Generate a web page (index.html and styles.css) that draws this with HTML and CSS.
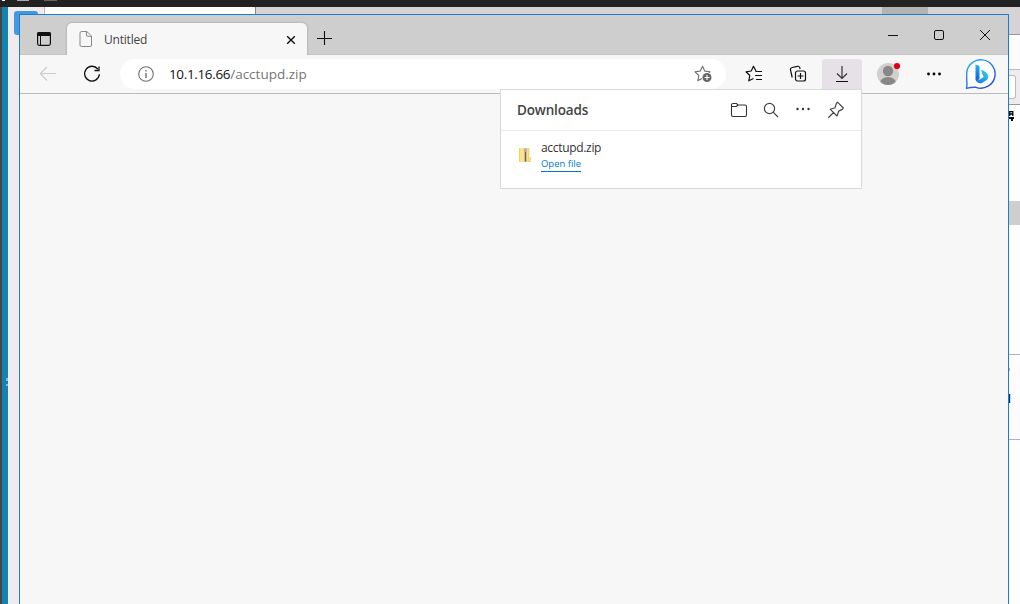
FILE: index.html
```html
<!DOCTYPE html>
<html lang="en">
<head>
  <meta charset="UTF-8" />
  <meta name="viewport" content="width=device-width, initial-scale=1.0"/>
  <title>Untitled</title>
  <link rel="stylesheet" href="styles.css">
</head>
<body>
  <!-- windows showing behind the browser -->
  <div class="desktop">
    <div class="taskbar"><i class="mark mark-a"></i><i class="mark mark-b"></i><i class="mark mark-c"></i></div>
    <div class="edge-dark"></div>
    <div class="edge-teal"></div>
    <div class="edge-speck"></div>
    <div class="back-side"></div>
    <div class="back-button"></div>
    <div class="back-tab"></div>
    <div class="back-title"></div>
    <div class="back-control"></div>
    <div class="back-right">
      <div class="strip strip-title"></div>
      <div class="strip strip-white"></div>
      <div class="strip strip-tools"><div class="strip-box"></div></div>
      <div class="strip strip-font">
        <svg width="6" height="11" viewBox="0 0 6 11"><path d="M.7 5V.7h3.100V5M.7 3h3" fill="none" stroke="#000" stroke-width="1.300"/><path d="M0 6h5v2H4v2H2V8H0z"/></svg>
      </div>
      <div class="strip strip-gray"></div>
      <div class="strip strip-page"></div>
      <div class="strip strip-note"><div class="speck"></div><div class="caret"></div></div>
    </div>
  </div>

  <div class="window">
    <div class="tabbar">
      <div class="tab-actions">
        <svg width="16" height="16" viewBox="0 0 16 16"><rect x="1.600" y="1.600" width="12.800" height="12.800" rx="1.800" fill="none" stroke="#111" stroke-width="1.200"/><path d="M1 5V3a2 2 0 0 1 2-2h10a2 2 0 0 1 2 2v2z" fill="#111"/><path d="M4.500 5v9.500" stroke="#111"/></svg>
      </div>
      <div class="tab">
        <svg class="page-icon" width="14" height="18" viewBox="0 0 14 18"><path d="M2.500 1.500h5.300L12.500 6v9a1.500 1.500 0 0 1-1.500 1.500H2.500A1.500 1.500 0 0 1 1 15V3a1.500 1.500 0 0 1 1.500-1.500zM7.500 1.500V5A1.300 1.300 0 0 0 8.800 6.300h3.700" fill="none" stroke="#888"/></svg>
        <span class="tab-title">Untitled</span>
        <svg class="tab-close" width="10" height="10" viewBox="0 0 10 10"><path d="M1.200 1.200l7.600 7.600M8.800 1.200L1.200 8.800" stroke="#111" stroke-width="1.400"/></svg>
      </div>
      <svg class="new-tab" width="16" height="16" viewBox="0 0 16 16"><path d="M8.500 1v14M1 8.500h15" stroke="#111" stroke-width="1.100"/></svg>
      <div class="controls">
        <svg width="46" height="40" viewBox="0 0 46 40"><path d="M18 20.500h10" stroke="#111"/></svg>
        <svg width="46" height="40" viewBox="0 0 46 40"><rect x="18.500" y="15.500" width="9" height="9" rx="1.500" fill="none" stroke="#111"/></svg>
        <svg width="46" height="40" viewBox="0 0 46 40"><path d="M18 15l10 10M28 15L18 25" stroke="#111"/></svg>
      </div>
    </div>

    <div class="toolbar">
      <div class="tool back">
        <svg width="18" height="16" viewBox="0 0 18 16"><path d="M8 1L1.300 7.500 8 14.500M1.300 7.500H17" fill="none" stroke="#cbcbcb" stroke-width="1.100"/></svg>
      </div>
      <div class="tool reload">
        <svg width="18" height="18" viewBox="0 0 18 18"><path d="M14.800 4A7.400 7.400 0 1 0 16.400 9.300M16 1.500V5.500H11.500" fill="none" stroke="#111" stroke-width="1.300"/></svg>
      </div>
      <div class="address">
        <svg width="16" height="16" viewBox="0 0 16 16"><circle cx="8" cy="8" r="7.300" fill="none" stroke="#707070" stroke-width="1.100"/><path d="M8 7v5M8 4v1.600" stroke="#707070" stroke-width="1.400"/></svg>
        <span class="url"><span class="host">10.1.16.66</span><span class="path">/acctupd.zip</span></span>
        <svg class="star" width="18" height="18" viewBox="0 0 18 18"><path d="M8.500 1.300l2.300 4.800 5.200.7-3.800 3.700 1 5.300-4.700-2.500-4.700 2.500 1-5.300L1 6.800l5.200-.7z" fill="none" stroke="#707070" stroke-width="1.100" stroke-linejoin="round"/><circle cx="13" cy="12.500" r="5.200" fill="#fff"/><circle cx="13" cy="12.500" r="4.500" fill="#666"/><path d="M13 10v5M10.500 12.500h5" stroke="#fff" stroke-width="1.100"/></svg>
      </div>
      <div class="tool favorites">
        <svg width="18" height="18" viewBox="0 0 18 18"><path d="M11 6L8.500 1.300 6.200 6 1 6.800l3.800 3.700-1 5.300L8.500 13.500" fill="none" stroke="#111" stroke-width="1.200" stroke-linejoin="round"/><path d="M10.500 6.500H17M10 10.500h7M11 14.500h6" stroke="#111" stroke-width="1.100"/></svg>
      </div>
      <div class="tool collections">
        <svg width="18" height="18" viewBox="0 0 18 18"><path d="M3.200 12.500L1.500 5a2 2 0 0 1 1.600-2.500L8.500 1.300a2 2 0 0 1 2.300 1.300l.3 1.400" fill="none" stroke="#111" stroke-width="1.200"/><rect x="6.500" y="6" width="10" height="10" rx="2" fill="#f7f7f7" stroke="#111" stroke-width="1.200"/><path d="M11.500 8v6M8.500 11h6" stroke="#111" stroke-width="1.200"/></svg>
      </div>
      <div class="tool downloads-btn">
        <svg width="16" height="18" viewBox="0 0 16 18"><path d="M8 1v12M3 8.500l5 5 5-5" fill="none" stroke="#333" stroke-width="1.200"/><path d="M2 16.500h12" stroke="#111"/></svg>
      </div>
      <div class="tool profile">
        <svg width="26" height="26" viewBox="0 0 26 26"><defs><clipPath id="face"><circle cx="13" cy="13" r="11"/></clipPath></defs><g clip-path="url(#face)"><path d="M0 0h26v26H0z" fill="#d2d0ce"/><circle cx="13" cy="10" r="5.200" fill="#8a8886"/><ellipse cx="13" cy="22" rx="8" ry="6" fill="#8a8886"/></g><circle cx="22" cy="5" r="3.100" fill="#e60012"/></svg>
      </div>
      <div class="tool menu">
        <svg width="16" height="6" viewBox="0 0 16 6"><circle cx="2.500" cy="3" r="1.400"/><circle cx="8" cy="3" r="1.400"/><circle cx="13.500" cy="3" r="1.400"/></svg>
      </div>
      <div class="tool bing">
        <svg width="32" height="32" viewBox="0 0 32 32">
          <defs>
            <linearGradient id="ring" x1="0" y1="0" x2=".7" y2="1"><stop offset="0" stop-color="#25bdf5"/><stop offset=".55" stop-color="#2876e8"/><stop offset="1" stop-color="#2351c5"/></linearGradient>
            <linearGradient id="stem" x1="0" y1="0" x2="0" y2="1"><stop offset="0" stop-color="#24b4f2"/><stop offset="1" stop-color="#1556d8"/></linearGradient>
            <linearGradient id="bowl" x1="1" y1="0" x2="0" y2="1"><stop offset="0" stop-color="#35d8e8"/><stop offset="1" stop-color="#1673e6"/></linearGradient>
          </defs>
          <path d="M1.500 30.300Q2.300 27 1.700 22V16A14.200 14.200 0 1 1 11 29.300Q6 29 1.500 30.300z" fill="#fff" stroke="url(#ring)" stroke-width="1.400" stroke-linejoin="round"/>
          <path d="M10.500 6.500l3 1.100c.7.300 1 .7 1 1.400v11.500L12 23.500a3 3 0 0 1-1.500-3z" fill="url(#stem)"/>
          <path d="M16.500 11.500l4 2.500c3.700 2.500 3.400 6.800.7 8.600l-4.200 2.300c-3 1-6.100-.7-6.500-4.500 1 2.300 2.500 2.300 4.300 1.200l3.900-2.600-1.500-3.200c-.6-1.200-.9-2.500-.7-4.300z" fill="url(#bowl)"/>
        </svg>
      </div>
    </div>

    <div class="flyout">
      <div class="flyout-head">
        <h2>Downloads</h2>
        <svg class="folder" width="18" height="16" viewBox="0 0 18 16"><path d="M1.500 4V3A1.500 1.500 0 0 1 3 1.500h3.500l1.500 1.500H15A1.500 1.500 0 0 1 16.500 4.500v8.500a1.500 1.500 0 0 1-1.500 1.500H3A1.500 1.500 0 0 1 1.500 13zM1.500 4.500h4.800l1.700-1.500" fill="none" stroke="#333" stroke-width="1.100"/></svg>
        <svg width="16" height="16" viewBox="0 0 16 16"><circle cx="6.500" cy="6.500" r="5.100" fill="none" stroke="#444" stroke-width="1.200"/><path d="M10.200 10.200l4.800 4.800" stroke="#444" stroke-width="1.200"/></svg>
        <svg width="16" height="16" viewBox="0 0 16 16"><circle cx="2.500" cy="7" r="1.200" fill="#333"/><circle cx="8" cy="7" r="1.200" fill="#333"/><circle cx="13.500" cy="7" r="1.200" fill="#333"/></svg>
        <svg width="18" height="18" viewBox="0 0 18 18"><path d="M10.500 1.200l5.800 5.800-1 1.400-3.600 1.700-1.700 4.900-6.600-6.700L8 6.800l1.500-4.700zM6.800 11.300L1.300 16.700" fill="none" stroke="#444" stroke-width="1.200" stroke-linejoin="round"/></svg>
      </div>
      <div class="download">
        <svg class="zip" width="14" height="16" viewBox="0 0 14 16"><path d="M1 1h10.500v9H13v5H1z" fill="#ffe28a"/><path d="M1 1h1v14H1z" fill="#f4cf63"/><path d="M10.500 1v14M12 11v4" stroke="#f5d36c"/><path d="M7.500 3v12" stroke="#9a968c" stroke-width="2"/><path d="M7.500 5v9" stroke="#666"/><circle cx="7.500" cy="2.800" r="1.800" fill="#b4b4b4"/></svg>
        <div class="download-info">
          <span class="file-name">acctupd.zip</span>
          <a class="open-file">Open file</a>
        </div>
      </div>
    </div>
  </div>
</body>
</html>
```
FILE: styles.css
```css
* {
  box-sizing: border-box;
}

body {
  margin: 0;
  width: 1020px;
  height: 604px;
  overflow: hidden;
  position: relative;
  background: #fff;
  font-family: 'Open Sans', 'Noto Sans', sans-serif;
  color: #333;
}

svg {
  display: block;
  flex: none;
}

/* desktop */
.desktop > div {
  position: absolute;
}

.desktop .taskbar {
  left: 0;
  top: 0;
  width: 1020px;
  height: 7px;
  background: #222;
}

.mark {
  position: absolute;
  top: 0;
  height: 1px;
  background: #aaa;
}

.mark-a { left: 2px; width: 3px; background: #fff; }
.mark-b { left: 17px; width: 12px; }
.mark-c { left: 44px; width: 13px; background: #666; }

.desktop .edge-dark {
  left: 0;
  top: 7px;
  width: 2px;
  height: 597px;
  background: #4a4547;
}

.desktop .edge-teal {
  left: 2px;
  top: 7px;
  width: 6px;
  height: 597px;
  background: #1284b0;
}

.desktop .edge-speck {
  left: 6px;
  top: 378px;
  width: 2px;
  height: 8px;
  border-top: 3px solid #7ac0dc;
  border-bottom: 2px solid #7ac0dc;
}

.desktop .back-side {
  left: 8px;
  top: 7px;
  width: 37px;
  height: 597px;
  background: #f0ebef;
  border-right: 1px solid #bbb;
}

.desktop .back-button {
  left: 14px;
  top: 11px;
  width: 24px;
  height: 24px;
  border-radius: 3px;
  background: #4299e1;
}

.desktop .back-tab {
  left: 45px;
  top: 7px;
  width: 211px;
  height: 8px;
  background: #fff;
  border-right: 1px solid #888;
}

.desktop .back-title {
  left: 256px;
  top: 7px;
  width: 753px;
  height: 8px;
  background: #d5d3d5;
}

.desktop .back-control {
  left: 882px;
  top: 7px;
  width: 46px;
  height: 8px;
  background: #b3b3b3;
}

.desktop .back-right {
  left: 1009px;
  top: 7px;
  width: 11px;
  height: 597px;
  display: flex;
  flex-direction: column;
}

.strip-title { height: 28px; background: #d5d3d5; border-bottom: 1px solid #999; }
.strip-white { height: 35px; background: #fffbff; border-bottom: 1px solid #bbb; }
.strip-tools { height: 35px; padding-top: 5px; background: #f0ebef; border-bottom: 1px solid #999; }
.strip-box { width: 7px; height: 24px; background: #fff; border: 1px solid #bbb; border-left: none; border-radius: 0 3px 3px 0; }
.strip-font { height: 96px; padding-top: 6px; }
.strip-gray { height: 24px; background: #cecece; }
.strip-page { height: 130px; border-bottom: 1px solid #b0b0cc; }
.strip-note { height: 85px; padding-top: 13px; background: #fffbff; border-bottom: 1px solid #b0b0cc; }
.speck { width: 1px; height: 3px; background: #8fb8dd; }
.caret { width: 2px; height: 9px; margin-top: 23px; background: #102b78; border-right: 1px solid #9edcff; }

/* browser window */
.window {
  position: absolute;
  left: 19px;
  top: 14px;
  width: 990px;
  height: 590px;
  border: 1px solid #1b7fd0;
  border-bottom: none;
  background: #f7f7f7;
}

.tabbar {
  display: flex;
  align-items: flex-start;
  height: 40px;
  background: #cecece;
  box-shadow: inset 0 -1px #c5c5c5;
}

.tab-actions {
  width: 47px;
  padding: 16px 0 0 16px;
}

.tab {
  display: flex;
  align-items: center;
  width: 240px;
  height: 32px;
  margin-top: 8px;
  padding: 0 11px 0 12px;
  background: #f7f7f7;
  border-radius: 5px 5px 0 0;
  box-shadow: 0 0 2px rgba(0, 0, 0, 0.35);
  clip-path: inset(-3px -3px 0 -3px);
}

.tab-title {
  flex: 1;
  margin-left: 11px;
  font-size: 12px;
  letter-spacing: -0.2px;
  color: #444;
}

.tab-close {
  margin-top: 1px;
}

.new-tab {
  margin: 15px 0 0 9px;
}

.controls {
  display: flex;
  margin-left: auto;
}

.toolbar {
  display: flex;
  align-items: center;
  height: 39px;
  border-bottom: 1px solid #bcbcbc;
}

.tool {
  display: flex;
  justify-content: center;
  align-items: center;
  width: 44px;
  height: 30px;
}

.back { width: 56px; }
.reload { width: 32px; }
.collections { margin-right: 2px; }
.profile { width: 48px; margin-left: 2px; }
.bing { width: 50px; }

.downloads-btn {
  width: 40px;
  background: #e6e1e6;
  border-radius: 3px 3px 0 0;
}

.address {
  display: flex;
  align-items: center;
  width: 606px;
  height: 30px;
  margin: 0 6px 0 12px;
  padding: 0 14px 0 18px;
  border-radius: 15px;
  background: #fff;
}

.url {
  flex: 1;
  margin-left: 15px;
  font-size: 13.5px;
}

.host {
  color: #111;
  letter-spacing: -0.35px;
}

.path {
  color: #767676;
}

/* downloads flyout */
.flyout {
  position: absolute;
  left: 480px;
  top: 74px;
  width: 362px;
  height: 100px;
  border: 1px solid #d9d9d9;
  background: #fff;
}

.flyout-head {
  display: flex;
  align-items: center;
  gap: 16px;
  height: 41px;
  padding: 0 16px;
  border-bottom: 1px solid #ebebeb;
}

.flyout-head h2 {
  flex: 1;
  margin: 0;
  font-size: 13.5px;
  font-weight: 600;
  letter-spacing: -0.15px;
  color: #444;
}

.folder {
  margin-right: -1px;
}

.download {
  display: flex;
  align-items: flex-start;
  padding: 8px 17px;
}

.zip {
  margin-top: 8px;
}

.download-info {
  display: flex;
  flex-direction: column;
  align-items: flex-start;
  margin-left: 9px;
}

.file-name {
  font-size: 12px;
  line-height: 17px;
  letter-spacing: -0.32px;
}

.open-file {
  font-size: 9.5px;
  line-height: 15px;
  letter-spacing: -0.02px;
  color: #0078d4;
  border-bottom: 1px solid #0078d4;
}
```
